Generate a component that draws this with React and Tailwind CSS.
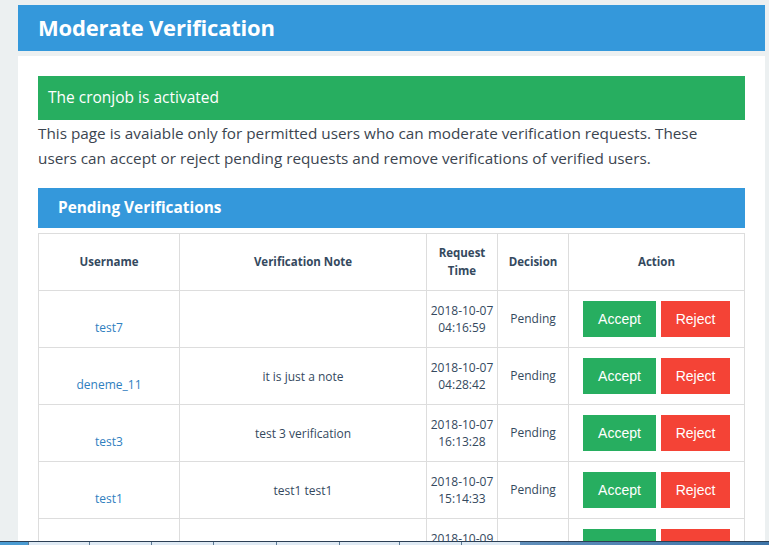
import React from "react";

const rows = [
  { user: "test7", note: "", date: "2018-10-07", time: "04:16:59" },
  { user: "deneme_11", note: "it is just a note", date: "2018-10-07", time: "04:28:42" },
  { user: "test3", note: "test 3 verification", date: "2018-10-07", time: "16:13:28" },
  { user: "test1", note: "test1 test1", date: "2018-10-07", time: "15:14:33" },
  { user: "test9", note: "", date: "2018-10-09", time: "10:00:00" },
];

const tabs = [28, 61, 62, 62, 63, 63, 60, 62, 59];

export default function App() {
  return (
    <div
      className="relative h-[545px] overflow-hidden bg-[#ecf0f1] pl-[18px] pr-[4px] pt-[5px] text-[#34495e]"
      style={{ fontFamily: '"Open Sans", "Noto Sans", sans-serif' }}
    >
      <div className="flex h-[46px] items-center bg-[#3498db] px-[20px] pb-[2px]">
        <h1 className="text-[22px] font-bold tracking-[-0.2px] text-white">Moderate Verification</h1>
      </div>
      <div className="mt-[5px] bg-white px-[20px] pt-[20px] pb-[20px]">
        <div className="flex h-[44px] items-center bg-[#27ae60] px-[10px] text-[15.5px] text-white">
          The cronjob is activated
        </div>
        <p className="pt-[1px] text-[15.3px] leading-[25px] text-[#3b4550]">
          This page is avaiable only for permitted users who can moderate verification requests. These
          <br />
          users can accept or reject pending requests and remove verifications of verified users.
        </p>
        <div className="mt-[17px] flex h-[40px] items-center bg-[#3498db] px-[20px] text-[15.4px] font-bold text-white">
          Pending Verifications
        </div>
        <table className="mt-[5px] w-full table-fixed border-collapse text-[12px]">
          <colgroup>
            <col className="w-[141px]" />
            <col className="w-[247px]" />
            <col className="w-[71px]" />
            <col className="w-[71px]" />
            <col />
          </colgroup>
          <thead>
            <tr className="h-[57px]">
              {["Username", "Verification Note", "Request Time", "Decision", "Action"].map((h) => (
                <th
                  key={h}
                  className="border border-[#dddddd] px-[8px] text-center align-middle text-[11.5px] font-bold leading-[18px] text-[#34495e]"
                >
                  {h === "Request Time" ? (
                    <>
                      Request
                      <br />
                      Time
                    </>
                  ) : (
                    h
                  )}
                </th>
              ))}
            </tr>
          </thead>
          <tbody>
            {rows.map((r) => (
              <tr key={r.user} className="h-[57px]">
                <td className="border border-[#dddddd] pt-[17px] text-center align-middle leading-[17px] text-[#2f80c0]">
                  {r.user}
                </td>
                <td className="border border-[#dddddd] text-center align-middle leading-[17px]">{r.note}</td>
                <td className="border border-[#dddddd] text-center align-middle leading-[17px]">
                  {r.date}
                  <br />
                  {r.time}
                </td>
                <td className="border border-[#dddddd] text-center align-middle">Pending</td>
                <td className="border border-[#dddddd] align-middle">
                  <div
                    className="flex justify-center gap-[5px] text-[14px] text-white"
                    style={{ fontFamily: '"Liberation Sans", Arial, sans-serif' }}
                  >
                    <button className="h-[36px] w-[73px] bg-[#27ae60]">Accept</button>
                    <button className="h-[36px] w-[69px] bg-[#f44336]">Reject</button>
                  </div>
                </td>
              </tr>
            ))}
          </tbody>
        </table>
      </div>
      <div className="absolute bottom-0 left-0 right-0 flex h-[4px] border-t border-[#2b3f55] bg-gradient-to-r from-[#a9c8e2] to-[#3d74a8]">
        {tabs.map((w, i) => (
          <div
            key={i}
            className={
              i === 0
                ? "h-full bg-[#4a9bd2]"
                : "h-full border-l border-[#5b7a96] bg-[#dfeaf4]"
            }
            style={{ width: w }}
          />
        ))}
      </div>
    </div>
  );
}
